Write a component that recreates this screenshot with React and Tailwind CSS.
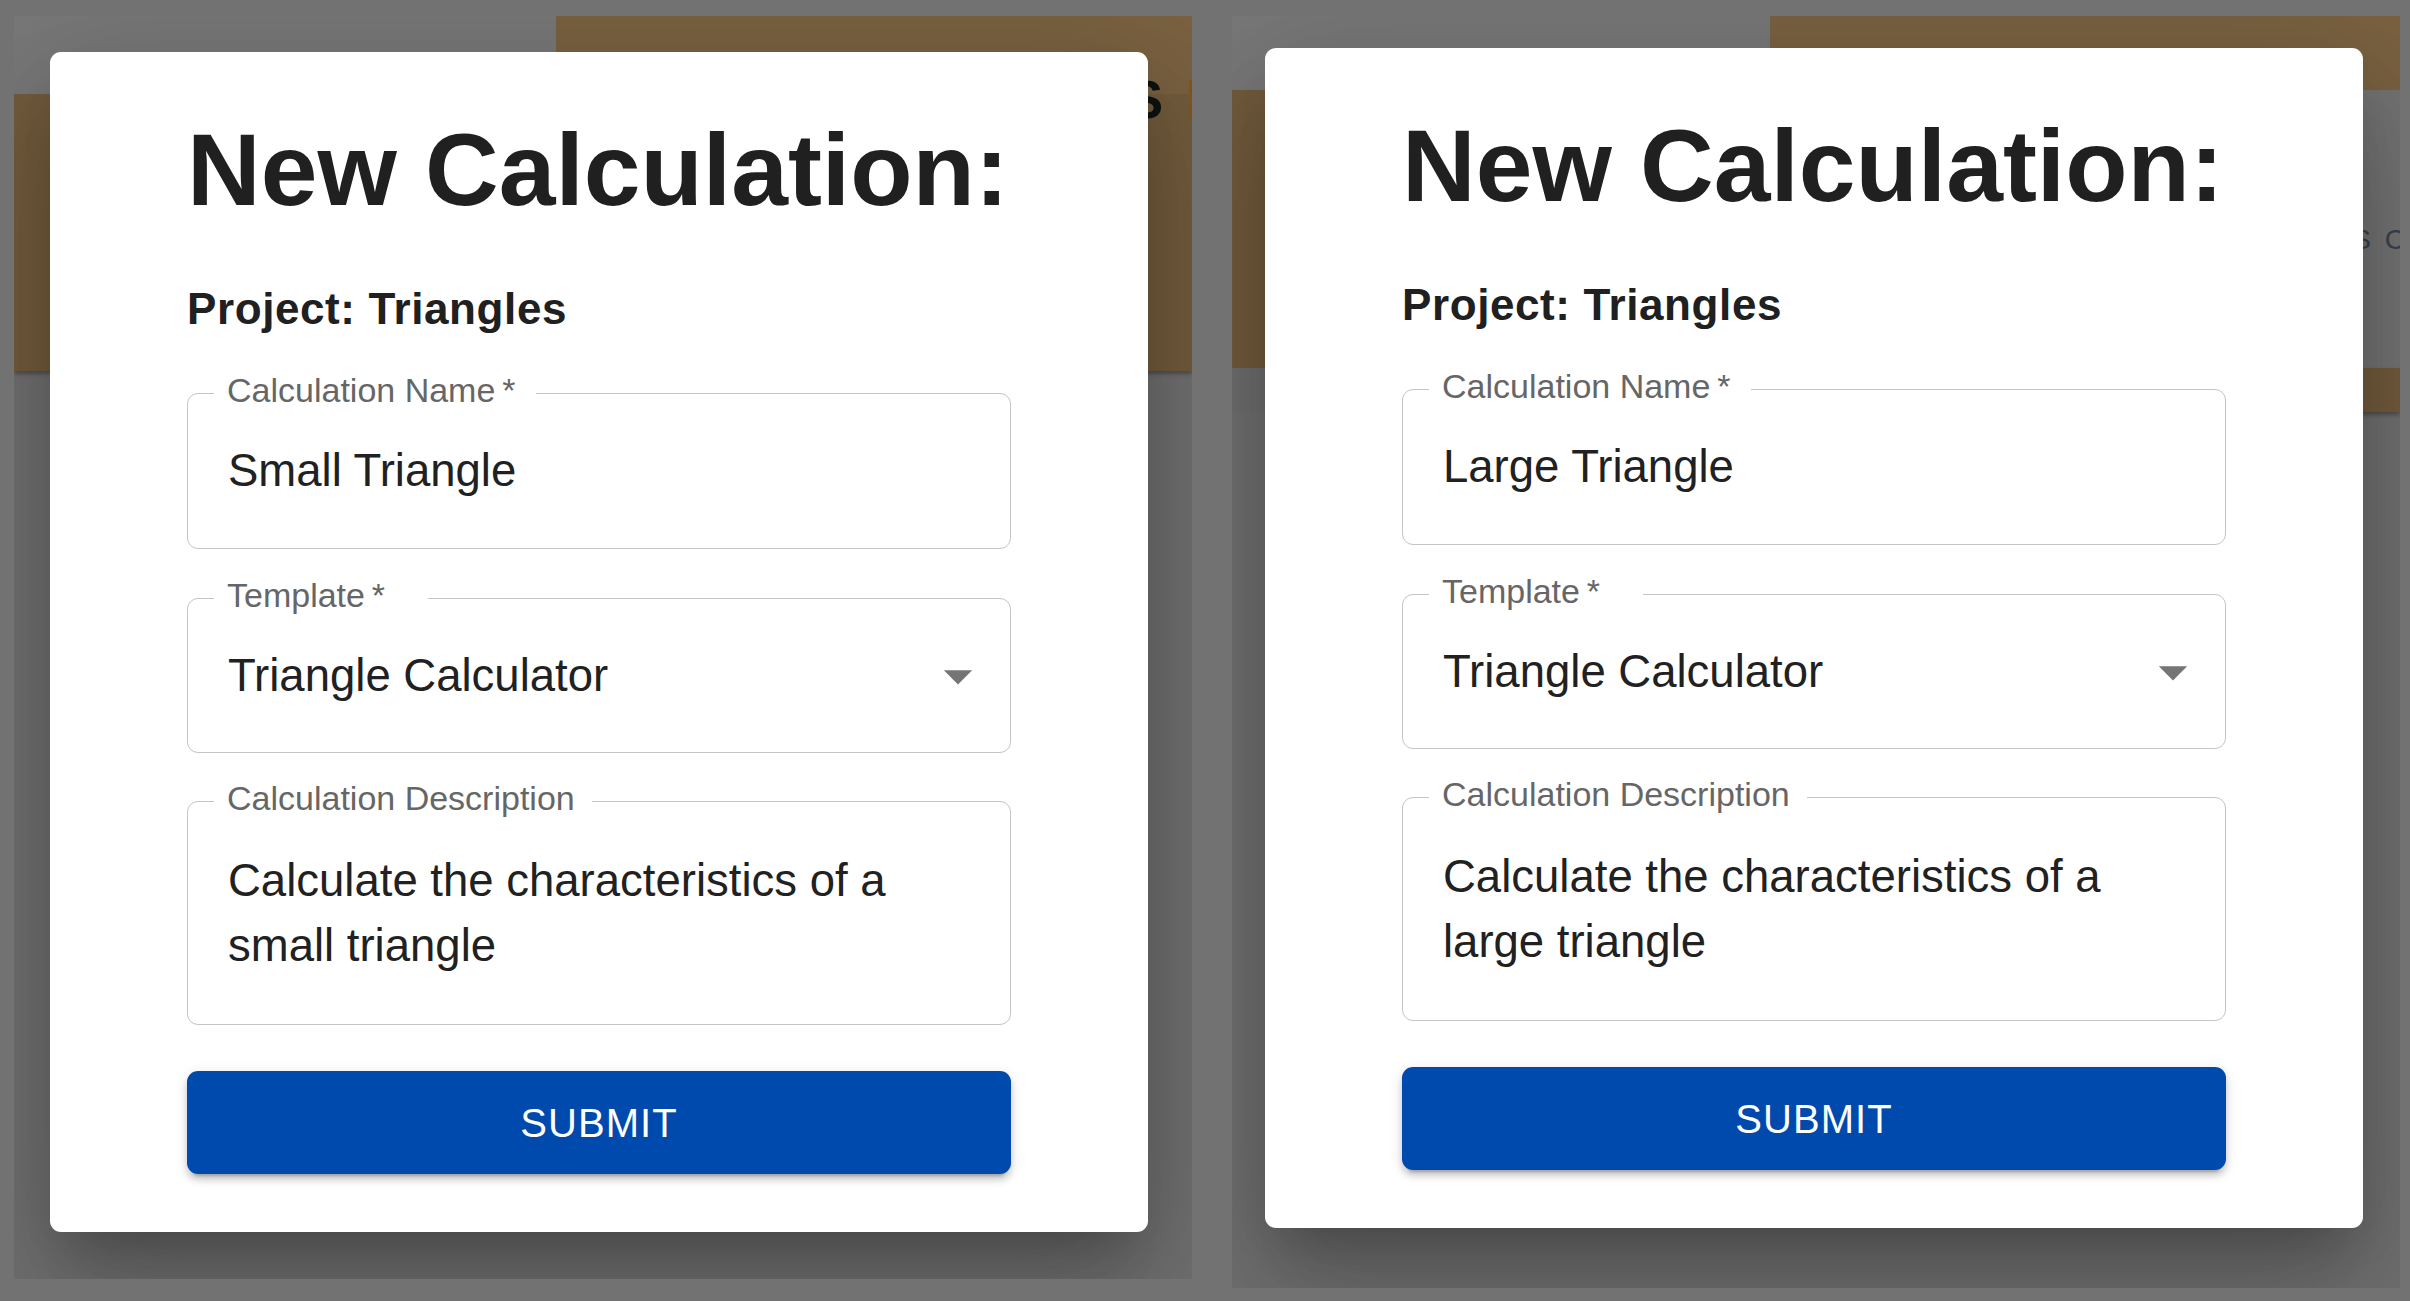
import React from 'react';

const font = "font-['Liberation_Sans',Arial,sans-serif]";

const ArrowDrop = () => (
    <svg viewBox="0 0 24 24" className="w-[68px] h-[68px] shrink-0 mr-[18px]" fill="#757575">
        <path d="M7 10l5 5 5-5z" />
    </svg>
);

const Field = ({ label, notch, className, children }) => (
    <div className={`relative rounded-[11px] border border-[#c4c4c4] ${className}`}>
        <span className={`absolute left-[26px] top-[-21px] bg-white pl-[13px] ${notch} text-[34px] leading-none text-[#666666] whitespace-nowrap`}>
            {label}
        </span>
        {children}
    </div>
);

const CalcModal = ({ name, description, className }) => (
    <div className={`absolute w-[1098px] h-[1180px] bg-white rounded-[11px] px-[137px] pt-[67px] flex flex-col shadow-[0_31px_42px_-20px_rgba(0,0,0,0.2),0_68px_108px_8px_rgba(0,0,0,0.14),0_25px_130px_23px_rgba(0,0,0,0.12)] ${className}`}>
        <h2 className="text-[102px] font-bold leading-none text-[#202020] whitespace-nowrap">New Calculation:</h2>
        <h3 className="mt-[66px] text-[44px] font-bold leading-none tracking-[0.6px] text-[#202020]">Project: Triangles</h3>

        <Field label={'Calculation Name\u2009*'} notch="pr-[21px]" className="mt-[62px] h-[156px] flex items-center">
            <span className="pl-[40px] text-[45.5px] leading-none text-[#212121]">{name}</span>
        </Field>

        <Field label={'Template\u2009*'} notch="pr-[43px]" className="mt-[49px] h-[155px] flex items-center justify-between">
            <span className="pl-[40px] text-[45.5px] leading-none text-[#212121]">Triangle Calculator</span>
            <ArrowDrop />
        </Field>

        <Field label="Calculation Description" notch="pr-[17px]" className="mt-[48px] h-[224px]">
            <p className="pl-[40px] pr-[40px] pt-[46px] text-[45.5px] leading-[65px] text-[#212121]">{description}</p>
        </Field>

        <button className="mt-[46px] h-[103px] w-full rounded-[11px] bg-[#004aad] text-white text-[40px] font-medium tracking-[1.1px] leading-none shadow-[0_8px_3px_-6px_rgba(0,0,0,0.2),0_6px_6px_0_rgba(0,0,0,0.14),0_3px_14px_0_rgba(0,0,0,0.12)]">
            SUBMIT
        </button>
    </div>
);

const LeftPanel = () => (
    <div className="relative w-[1178px] h-[1263px] overflow-hidden bg-[#717171] shrink-0">
        <div className="flex h-[78px]">
            <div className="w-[542px] bg-[#787878]" />
            <div className="flex-1 bg-[#7a6241] flex justify-end items-start">
                <span className="mt-[57px] mr-[26px] text-[53px] font-bold leading-none text-[#0d1212] whitespace-nowrap">TRIANGLES</span>
                <span className="mt-[64px] h-[38px] w-[3px] bg-[#8a5618]" />
            </div>
        </div>
        <div className="h-[277px] bg-[#735c3d] shadow-[0_3px_4px_rgba(0,0,0,0.3)]" />
        <CalcModal
            className="left-[36px] top-[36px]"
            name="Small Triangle"
            description="Calculate the characteristics of a small triangle"
        />
    </div>
);

const RightPanel = () => (
    <div className="relative w-[1168px] h-[1272px] overflow-hidden bg-[#717171] shrink-0">
        <div className="flex h-[74px]">
            <div className="w-[538px] bg-[#787878]" />
            <div className="flex-1 bg-[#7a6241]" />
        </div>
        <div className="flex h-[278px]">
            <div className="w-[540px] bg-[#735c3d]" />
            <div className="flex-1 bg-[#747474] flex justify-end items-start">
                <span className="mt-[136px] -mr-[8px] text-[28px] leading-none tracking-[3px] text-[#38424f] whitespace-nowrap">PROJECTS C</span>
            </div>
        </div>
        <div className="flex h-[44px]">
            <div className="w-[540px] bg-[#6f6f6f]" />
            <div className="flex-1 bg-[#735c3d] shadow-[0_3px_4px_rgba(0,0,0,0.3)]" />
        </div>
        <CalcModal
            className="left-[33px] top-[32px]"
            name="Large Triangle"
            description="Calculate the characteristics of a large triangle"
        />
    </div>
);

export default function App() {
    return (
        <div className={`w-[2410px] h-[1301px] overflow-hidden bg-[#727272] flex items-start pl-[14px] pt-[16px] gap-[40px] ${font}`}>
            <LeftPanel />
            <RightPanel />
        </div>
    );
}
